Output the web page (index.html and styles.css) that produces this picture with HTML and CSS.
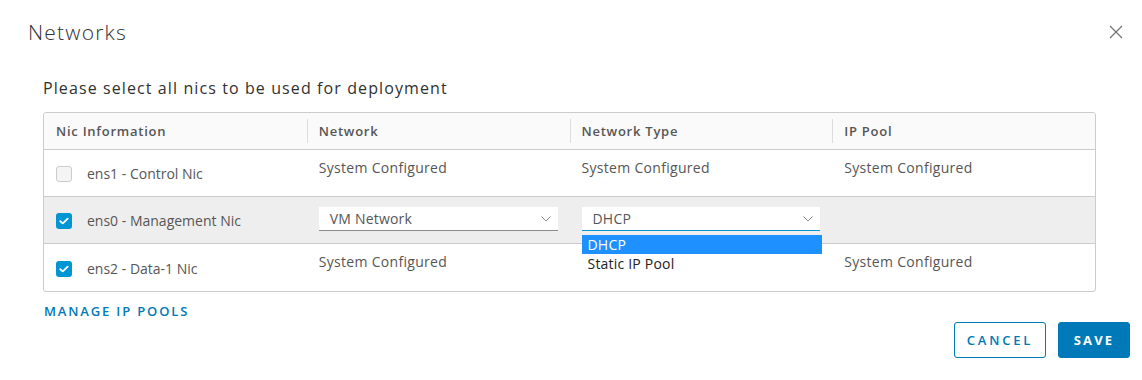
FILE: index.html
```html
<!DOCTYPE html>
<html>
<head>
<meta charset="utf-8">
<link rel="stylesheet" href="styles.css">
</head>
<body>
<div class="modal">
  <div class="modal-header">
    <h3 class="modal-title">Networks</h3>
    <button class="close" aria-label="Close">
      <svg width="14" height="14" viewBox="0 0 14 14"><path d="M1 1L13 13M13 1L1 13" stroke="#737373" stroke-width="1.2" fill="none"/></svg>
    </button>
  </div>
  <div class="modal-body">
    <p class="intro">Please select all nics to be used for deployment</p>
    <div class="grid">
      <div class="grid-head">
        <div class="hcell">Nic Information</div>
        <div class="hcell sep">Network</div>
        <div class="hcell sep">Network Type</div>
        <div class="hcell sep">IP Pool</div>
      </div>
      <div class="grid-row">
        <div class="cell nic">
          <span class="cb disabled"></span>
          <span>ens1 - Control Nic</span>
        </div>
        <div class="cell">System Configured</div>
        <div class="cell">System Configured</div>
        <div class="cell">System Configured</div>
      </div>
      <div class="grid-row selected">
        <div class="cell nic">
          <span class="cb checked"><svg width="10" height="8" viewBox="0 0 10 8"><path d="M1.3 4.2L3.8 6.4L8.7 1.6" stroke="#fff" stroke-width="1.8" fill="none" stroke-linecap="round" stroke-linejoin="round"/></svg></span>
          <span>ens0 - Management Nic</span>
        </div>
        <div class="cell">
          <div class="select">
            <span>VM Network</span>
            <svg class="chev" width="10" height="6" viewBox="0 0 10 6"><path d="M0.5 0.5L5 5L9.5 0.5" stroke="#8c8c8c" stroke-width="1" fill="none"/></svg>
          </div>
        </div>
        <div class="cell">
          <div class="select-wrap">
            <div class="select active">
              <span>DHCP</span>
              <svg class="chev" width="10" height="6" viewBox="0 0 10 6"><path d="M0.5 0.5L5 5L9.5 0.5" stroke="#8c8c8c" stroke-width="1" fill="none"/></svg>
            </div>
            <ul class="options">
              <li class="hl">DHCP</li>
              <li>Static IP Pool</li>
            </ul>
          </div>
        </div>
        <div class="cell"></div>
      </div>
      <div class="grid-row last">
        <div class="cell nic">
          <span class="cb checked"><svg width="10" height="8" viewBox="0 0 10 8"><path d="M1.3 4.2L3.8 6.4L8.7 1.6" stroke="#fff" stroke-width="1.8" fill="none" stroke-linecap="round" stroke-linejoin="round"/></svg></span>
          <span>ens2 - Data-1 Nic</span>
        </div>
        <div class="cell">System Configured</div>
        <div class="cell"></div>
        <div class="cell">System Configured</div>
      </div>
    </div>
    <a class="link" href="#">MANAGE IP POOLS</a>
  </div>
  <div class="modal-footer">
    <button class="btn btn-outline">CANCEL</button>
    <button class="btn btn-primary">SAVE</button>
  </div>
</div>
</body>
</html>
```
FILE: styles.css
```css
* { box-sizing: border-box; }
html, body { margin: 0; padding: 0; background: #fff; }
body { font-family: "Open Sans", "Liberation Sans", sans-serif; color: #565656; }

.modal { width: 1142px; height: 380px; padding: 0 12px 0 28px; }

.modal-header { display: flex; justify-content: space-between; align-items: center; height: 64px; padding-top: 0; }
.modal-title { margin: 0; font-size: 21px; font-weight: 300; color: #313131; letter-spacing: 1.2px; }
.close { border: 0; background: none; padding: 0; margin-right: 7px; width: 14px; height: 14px; display: flex; }

.modal-body { padding-left: 15px; padding-right: 34px; }
.intro { margin: 14px 0 0; font-size: 16px; line-height: 20px; color: #313131; height: 34px; letter-spacing: 1.1px; }

.grid { border: 1px solid #ccc; border-radius: 3px; width: 1053px; }
.grid-head { display: grid; grid-template-columns: repeat(4, 1fr); height: 37px; background: #fafafa; border-bottom: 1px solid #ccc; border-radius: 3px 3px 0 0; }
.hcell { font-size: 13px; font-weight: 600; color: #565656; padding-left: 12px; display: flex; align-items: center; position: relative; letter-spacing: 0.75px; }
.hcell.sep::before { content: ""; position: absolute; left: 0; top: 6px; height: 24px; width: 1px; background: #ddd; }

.grid-row { display: grid; grid-template-columns: repeat(4, 1fr); height: 47px; border-bottom: 1px solid #ccc; }
.grid-row.last { border-bottom: 0; height: 47px; }
.grid-row.selected { background: #eee; }
.cell { font-size: 14px; color: #565656; padding: 10px 12px 0; line-height: 16px; letter-spacing: 0.3px; }
.cell.nic { display: flex; align-items: center; padding-top: 2px; gap: 15px; font-size: 14px; letter-spacing: 0; }

.cb { width: 16px; height: 16px; border-radius: 3px; display: inline-flex; align-items: center; justify-content: center; flex: none; }
.cb.disabled { background: #f4f4f4; border: 1px solid #ccc; }
.cb.checked { background: #0095d3; }

.select { margin-top: 0; height: 24px; background: #fff; border-bottom: 1px solid #8c8c8c; display: flex; align-items: center; justify-content: space-between; padding: 0 7px 0 11px; font-size: 14px; color: #565656; letter-spacing: 0.2px; }
.select.active { border-bottom-color: #0095d3; }
.select-wrap { position: relative; }
.options { position: absolute; left: 0; top: 28px; width: 240px; margin: 0; padding: 0; list-style: none; background: #fff; z-index: 2; }
.options li { height: 19px; line-height: 19px; padding-left: 6px; font-size: 14px; color: #222; letter-spacing: 0.2px; }
.options li.hl { background: #1e90ff; color: #fff; }

.link { display: inline-block; margin-top: 10px; margin-left: 1px; font-size: 13px; font-weight: 600; letter-spacing: 1.85px; color: #0079b8; text-decoration: none; }

.modal-footer { display: flex; justify-content: flex-end; gap: 12px; margin-top: 1px; }
.btn { height: 36px; border-radius: 3px; font-family: inherit; font-size: 13px; letter-spacing: 2.8px; font-weight: 600; padding: 0; }
.btn-outline { background: #fff; border: 1px solid #0079b8; color: #0079b8; width: 92px; }
.btn-primary { background: #0079b8; border: 1px solid #0079b8; color: #fff; width: 72px; font-weight: 700; letter-spacing: 2.2px; }
```
